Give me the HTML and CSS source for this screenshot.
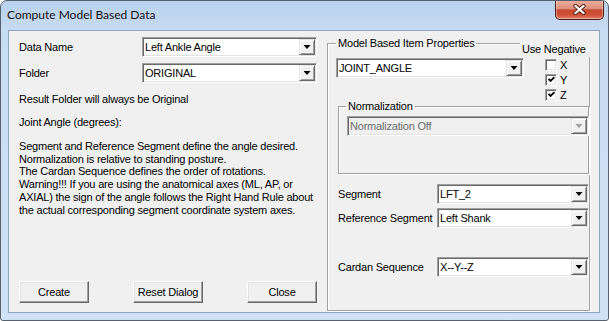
FILE: index.html
```html
<!DOCTYPE html>
<html lang="en">
<head>
  <meta charset="UTF-8" />
  <title>Compute Model Based Data</title>
  <link rel="stylesheet" href="styles.css">
</head>
<body>

  <div class="window">

    <!-- Title bar -->
    <div class="titlebar">
      <span class="title">Compute Model Based Data</span>
      <button class="close-btn" title="Close">
        <svg width="13" height="11" viewBox="0 0 13 11">
          <path d="M2.5 2 L10.5 9 M10.5 2 L2.5 9" stroke="#5b2418" stroke-width="4.2" stroke-linecap="round" />
          <path d="M2.5 2 L10.5 9 M10.5 2 L2.5 9" stroke="#fff" stroke-width="2.3" stroke-linecap="round" />
        </svg>
      </button>
    </div>

    <div class="client">

      <!-- Left side -->
      <div class="left-pane">
        <div class="field-row">
          <span class="field-label">Data Name</span>
          <div class="combo wide">
            <span class="combo-text">Left Ankle Angle</span>
            <span class="combo-btn"><i class="arrow"></i></span>
          </div>
        </div>
        <div class="field-row">
          <span class="field-label">Folder</span>
          <div class="combo wide">
            <span class="combo-text">ORIGINAL</span>
            <span class="combo-btn"><i class="arrow"></i></span>
          </div>
        </div>

        <p class="note">Result Folder will always be Original</p>
        <p class="note">Joint Angle (degrees):</p>

        <p class="desc">
          Segment and Reference Segment define the angle desired.<br>
          Normalization is relative to standing posture.<br>
          The Cardan Sequence defines the order of rotations.<br>
          Warning!!! If you are using the anatomical axes (ML, AP, or<br>
          AXIAL) the sign of the angle follows the Right Hand Rule about<br>
          the actual corresponding segment coordinate system axes.
        </p>

        <div class="button-row">
          <button class="btn">Create</button>
          <button class="btn">Reset Dialog</button>
          <button class="btn">Close</button>
        </div>
      </div>

      <!-- Right side -->
      <fieldset class="group props">
        <legend>Model Based Item Properties</legend>

        <div class="props-top">
          <div class="combo item">
            <span class="combo-text">JOINT_ANGLE</span>
            <span class="combo-btn"><i class="arrow"></i></span>
          </div>
          <div class="use-neg">
            <div class="use-neg-title">Use Negative</div>
            <div class="check-row">
              <span class="box"></span>X
            </div>
            <div class="check-row">
              <span class="box"><svg width="7" height="7" viewBox="0 0 7 7"><path d="M0.6 3 L2.6 5 L6.4 1.2" fill="none" stroke="#000" stroke-width="1.8" /></svg></span>Y
            </div>
            <div class="check-row">
              <span class="box"><svg width="7" height="7" viewBox="0 0 7 7"><path d="M0.6 3 L2.6 5 L6.4 1.2" fill="none" stroke="#000" stroke-width="1.8" /></svg></span>Z
            </div>
          </div>
        </div>

        <fieldset class="group norm">
          <legend>Normalization</legend>
          <div class="combo disabled">
            <span class="combo-text">Normalization Off</span>
            <span class="combo-btn"><i class="arrow"></i></span>
          </div>
        </fieldset>

        <div class="seg-row first">
          <span class="seg-label">Segment</span>
          <div class="combo">
            <span class="combo-text">LFT_2</span>
            <span class="combo-btn"><i class="arrow"></i></span>
          </div>
        </div>
        <div class="seg-row">
          <span class="seg-label">Reference Segment</span>
          <div class="combo">
            <span class="combo-text">Left Shank</span>
            <span class="combo-btn"><i class="arrow"></i></span>
          </div>
        </div>
        <div class="seg-row last">
          <span class="seg-label">Cardan Sequence</span>
          <div class="combo">
            <span class="combo-text">X--Y--Z</span>
            <span class="combo-btn"><i class="arrow"></i></span>
          </div>
        </div>
      </fieldset>

    </div>
  </div>

</body>
</html>
```

FILE: styles.css
```css
body {
  margin: 0;
  background: #fff;
  font-family: "Liberation Sans", Arial, sans-serif;
  font-size: 11px;
  letter-spacing: -0.2px;
  color: #000;
}

/* Window frame (Aero style) */
.window {
  width: 609px;
  height: 321px;
  box-sizing: border-box;
  border: 1px solid #56616d;
  border-radius: 7px 7px 3px 3px;
  background: linear-gradient(to bottom, #b9d1ec, #c8dcf2 30px, #d0e2f5);
  display: flex;
  flex-direction: column;
  overflow: hidden;
}

.titlebar {
  height: 29px;
  flex: none;
  display: flex;
  align-items: flex-start;
  padding-left: 6px;
}

.title {
  font-family: Lato, "Noto Sans", sans-serif;
  font-size: 12px;
  letter-spacing: 0;
  line-height: 28px;
  color: #111;
}

.close-btn {
  margin: -1px 4px 0 auto;
  width: 49px;
  height: 20px;
  padding: 0;
  border: 1px solid #4f2019;
  border-top: none;
  border-radius: 0 0 5px 5px;
  background: linear-gradient(to bottom, #eab0a2, #de8f7a 45%, #c8492f 52%, #cf5238 80%, #e2846a);
  box-shadow: inset 0 0 0 1px rgba(255, 255, 255, 0.35);
  display: flex;
  align-items: center;
  justify-content: center;
}

.close-btn svg {
  display: block;
}

/* Client area */
.client {
  flex: 1;
  margin: 0 8px 7px 7px;
  border: 1px solid #8ba4c0;
  background: #f0f0f0;
  display: flex;
}

.left-pane {
  width: 318px;
  flex: none;
  box-sizing: border-box;
  padding: 6px 0 9px 10px;
  display: flex;
  flex-direction: column;
}

.field-row {
  display: flex;
  align-items: center;
  height: 20px;
}

.field-row + .field-row {
  margin-top: 6px;
}

.field-label {
  width: 123px;
  flex: none;
}

.note {
  margin: 10px 0 0;
  line-height: 13px;
}

.desc {
  margin: 11px 0 0;
  line-height: 12.7px;
  white-space: nowrap;
}

.button-row {
  margin-top: auto;
  display: flex;
  gap: 44px;
}

/* Classic 3D push button */
.btn {
  width: 70px;
  height: 22px;
  padding: 0;
  font: inherit;
  letter-spacing: inherit;
  color: #000;
  background: #f0f0f0;
  border: 1px solid;
  border-color: #fff #696969 #696969 #fff;
  box-shadow: inset -1px -1px 0 #a0a0a0, inset 1px 1px 0 #e3e3e3;
}

/* Combo box */
.combo {
  display: flex;
  box-sizing: border-box;
  height: 20px;
  padding: 1px;
  background: #fff;
  border: 1px solid;
  border-color: #a0a0a0 #fff #fff #a0a0a0;
  box-shadow: inset 1px 1px 0 #696969, inset -1px -1px 0 #e3e3e3;
}

.combo.wide {
  width: 175px;
}

.combo-text {
  flex: 1;
  padding-left: 1px;
  line-height: 16px;
  white-space: nowrap;
  overflow: hidden;
}

.combo-btn {
  width: 16px;
  flex: none;
  box-sizing: border-box;
  background: #f0f0f0;
  border: 1px solid;
  border-color: #e3e3e3 #696969 #696969 #e3e3e3;
  box-shadow: inset 1px 1px 0 #fff, inset -1px -1px 0 #a0a0a0;
  display: flex;
  align-items: center;
  justify-content: center;
}

.arrow {
  display: block;
  width: 7px;
  height: 4px;
  background: #000;
  clip-path: polygon(0 0, 100% 0, 50% 100%);
}

.combo.disabled {
  background: #f0f0f0;
  color: #6d6d6d;
}

.combo.disabled .arrow {
  background: #a0a0a0;
}

/* Group boxes */
.group {
  margin: 0;
  border: 1px solid #a0a0a0;
  box-shadow: 1px 1px 0 #fff, inset 1px 1px 0 #fff;
  min-inline-size: 0;
}

.group legend {
  padding: 0 2px;
  line-height: 13px;
}

.props {
  flex: 1;
  box-sizing: border-box;
  margin: 6px 9px 1px 0;
  padding: 0 0 0 8px;
}

.props-top {
  display: flex;
  align-items: flex-start;
}

.combo.item {
  width: 188px;
  flex: none;
  margin-top: 8px;
}

.use-neg {
  width: 71px;
  flex: none;
  margin: -9px -2px 0 -4px;
}

.use-neg-title {
  height: 16px;
  line-height: 16px;
  padding-left: 2px;
  background: #f0f0f0;
}

.check-row {
  display: flex;
  align-items: center;
  gap: 3px;
  height: 15px;
  padding-left: 25px;
}

.check-row:first-of-type {
  margin-top: 2px;
}

.box {
  width: 12px;
  height: 12px;
  box-sizing: border-box;
  background: #fff;
  border: 1px solid;
  border-color: #a0a0a0 #fff #fff #a0a0a0;
  box-shadow: inset 1px 1px 0 #696969, inset -1px -1px 0 #e3e3e3;
  display: flex;
  align-items: center;
  justify-content: center;
}

.box svg {
  display: block;
}

.norm {
  margin: -2px 0 0 2px;
  padding: 0 0 37px 8px;
}

.norm legend {
  margin-left: -1px;
}

.norm .combo {
  margin: 3px -1px 0 0;
}

.seg-row {
  display: flex;
  align-items: center;
  height: 20px;
  padding-left: 2px;
  margin-top: 4px;
}

.seg-row.first {
  margin-top: 10px;
}

.seg-row.last {
  margin-top: 29px;
}

.seg-label {
  width: 99px;
  flex: none;
  white-space: nowrap;
}

.seg-row .combo {
  flex: 1;
}
```
